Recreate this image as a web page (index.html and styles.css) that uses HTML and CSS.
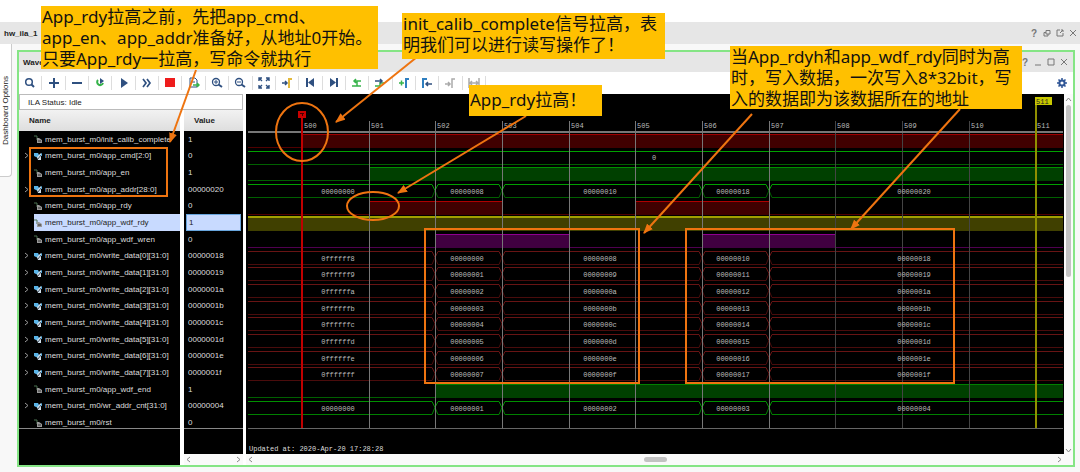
FILE: index.html
```html
<!DOCTYPE html>
<html lang="zh-CN">
<head>
<meta charset="utf-8">
<title>hw_ila_1</title>
<link rel="stylesheet" href="styles.css">
</head>
<body>
<div class="page">
  <header class="tabbar">
    <span class="tab-title">hw_ila_1</span>
    <div class="winctl">
      <button aria-label="Help">?</button>
      <button aria-label="Restore"><svg width="8" height="8"><path d="M3 1.500h4v3.500h-4zM3 3.500h-2v3.500h4v-2"/></svg></button>
      <button aria-label="Float"><svg width="8" height="8"><path d="M4 1H1v6h6V4M5 1h2v2M7 1L4 4"/></svg></button>
      <button aria-label="Close"><svg width="8" height="8"><path d="M1 1l6 6M7 1l-6 6"/></svg></button>
    </div>
  </header>
  <div class="workspace">
    <button class="side-tab"><span>Dashboard Options</span></button>
    <section class="panel">
      <header class="panel-head">
        <span>Wave</span>
        <div class="winctl">
          <button aria-label="Panel help">?</button>
          <button aria-label="Minimize"><svg width="8" height="8"><path d="M1 7h6"/></svg></button>
          <button aria-label="Maximize"><svg width="8" height="8"><path d="M1 1h6v6H1z"/></svg></button>
          <button aria-label="Close panel"><svg width="8" height="8"><path d="M1 1l6 6M7 1l-6 6"/></svg></button>
        </div>
      </header>
      <div class="toolbar">
        <div class="tools" id="tools"></div>
        <button class="gear" aria-label="Settings"><svg width="10" height="10" viewBox="0 0 10 10"><circle cx="5" cy="5" r="2.600" fill="none" stroke="#2f5596" stroke-width="2"/><path d="M5 0v2M5 8v2M0 5h2M8 5h2M1.500 1.500l1.400 1.400M7.100 7.100l1.400 1.400M8.500 1.500L7.100 2.900M2.900 7.100L1.500 8.500" stroke="#2f5596" stroke-width="1.500"/></svg></button>
      </div>
      <div class="content">
        <div class="signals">
          <div class="status">ILA Status: Idle</div>
          <div class="columns">
            <div class="col names">
              <div class="col-head">Name</div>
              <div class="list"><div class="rows" id="names"></div></div>
            </div>
            <div class="col values">
              <div class="col-head">Value</div>
              <div class="list"><div class="rows" id="values"></div></div>
              <div class="hbar"><svg width="5" height="7"><path d="M4 1L1 3.500L4 6"/></svg><svg width="5" height="7"><path d="M1 1l3 2.500L1 6"/></svg></div>
            </div>
          </div>
        </div>
        <div class="wave">
          <svg class="plot" id="plot" role="img" aria-label="Waveform"></svg>
          <div class="hbar"><svg width="5" height="7"><path d="M4 1L1 3.500L4 6"/></svg><i class="thumb"></i><svg width="5" height="7"><path d="M1 1l3 2.500L1 6"/></svg></div>
        </div>
        <div class="vbar"><svg width="7" height="5"><path d="M1 4l2.500-3L6 4"/></svg><i class="thumb"></i><svg width="7" height="5"><path d="M1 1l2.500 3L6 1"/></svg></div>
      </div>
    </section>
  </div>

  <svg class="marks" aria-hidden="true">
    <defs><marker id="head" markerUnits="userSpaceOnUse" markerWidth="10" markerHeight="8" refX="9" refY="4" orient="auto"><path class="tip" d="M0 0L10 4L0 8z"/></marker></defs>
    <rect x="30" y="148" width="137" height="48"/>
    <rect x="425" y="229" width="214" height="154"/>
    <rect x="686" y="229" width="268" height="154"/>
    <ellipse cx="302" cy="132" rx="26" ry="29"/>
    <ellipse cx="373" cy="206" rx="26" ry="14"/>
    <path class="arrow" d="M196 70L170 142"/>
    <path class="arrow" d="M417 57L336 122"/>
    <path class="arrow" d="M526 116L398 193"/>
    <path class="arrow" d="M752 114L644 233"/>
    <path class="arrow" d="M960 109L851 229"/>
  </svg>
  <p class="note note-a">App_rdy拉高之前，先把app_cmd、<br>app_en、app_addr准备好，从地址0开始。<br>只要App_rdy一拉高，写命令就执行</p>
  <p class="note note-b">init_calib_complete信号拉高，表<br>明我们可以进行读写操作了！</p>
  <p class="note note-c">App_rdy拉高！</p>
  <p class="note note-d">当App_rdyh和app_wdf_rdy同时为高<br>时，写入数据，一次写入8*32bit，写<br>入的数据即为该数据所在的地址</p>
</div>
<script src="script.js"></script>
</body>
</html>
```
FILE: styles.css
```css
* { box-sizing: border-box; }
body { margin: 0; background: #f8f8f8; font-family: "Liberation Sans", Arial, sans-serif; font-size: 8px; color: #222; }
button { border: 0; padding: 0; background: none; font: inherit; color: inherit; }
.page { position: relative; min-height: 472px; padding-top: 22px; background: linear-gradient(#fff 22px, #f8f8f8 22px); }
.tabbar { display: flex; align-items: center; justify-content: space-between; height: 22px; padding: 0 3px 0 4px; background: #e6e6e6; }
.tab-title, .panel-head { font-weight: bold; }
.winctl { display: flex; gap: 5px; align-items: center; }
.winctl button { display: flex; align-items: center; justify-content: center; width: 8px; height: 10px; color: #777; font-size: 10px; font-weight: bold; }
.winctl svg { fill: none; stroke: #777; }
.workspace { display: flex; align-items: flex-start; }
.side-tab { display: flex; align-items: center; justify-content: center; width: 12px; height: 133px; background: #fff; border: solid #ccc; border-width: 0 1px 1px 0; border-radius: 0 0 4px 0; }
.side-tab span { writing-mode: vertical-rl; transform: rotate(180deg); }
.panel { flex: 1; min-width: 0; margin: 6px 5px 5px 5px; border: 2px solid #85e585; background: #fff; }
.panel-head { display: flex; align-items: center; justify-content: space-between; height: 20px; padding: 0 5px 0 4px; background: #e6e6e6; }
.toolbar { display: flex; align-items: center; justify-content: space-between; height: 22px; padding-right: 6px; }
.tools { display: grid; grid-template-columns: repeat(20, 1fr); width: 467px; }
.tools button { display: flex; align-items: center; justify-content: center; height: 14px; border-right: 1px solid #ddd; }
.tools svg { fill: none; stroke: #2f5080; stroke-width: 2; }
.gear { display: flex; }
.content { display: flex; height: 371px; }
.signals { display: flex; flex-direction: column; width: 224px; }
.status { height: 16px; padding-left: 8px; line-height: 15px; border: 1px solid #bbb; }
.columns { display: flex; gap: 4px; flex: 1; }
.col { display: flex; flex-direction: column; background: #000; }
.names { width: 161px; }
.values { width: 59px; }
.col-head { height: 21px; line-height: 21px; padding-left: 10px; font-weight: bold; background: linear-gradient(#f2f2f2, #dedede); }
.list { height: 298px; overflow: hidden; border-bottom: 1px solid #888; }
.rows { display: grid; grid-template-rows: repeat(18, 1fr); height: 300px; color: #ddd; }
.row { display: flex; align-items: center; white-space: nowrap; }
.names .row { margin-left: 5px; padding-left: 10px; }
.names .row svg { flex: none; margin-right: 3px; }
.names .bus { margin-left: 0; padding-left: 5px; }
.names .bus svg:first-child { margin-right: 5px; }
.values .row { padding-left: 4px; }
.names .picked { margin-left: 15px; padding-left: 0; }
.rows .picked { background: #c8daff; color: #222; }
.values .picked { margin: 0 2px; padding-left: 2px; border: 1px solid #68a5dc; }
.hbar { display: flex; align-items: center; justify-content: space-between; height: 11px; margin-top: auto; padding: 0 2px; background: #fafafa; }
.hbar svg, .vbar svg { fill: none; stroke: #888; }
.thumb { display: block; border-radius: 3px; background: #c2c2c2; }
.hbar .thumb { width: 23px; height: 5px; }
.wave { display: flex; flex-direction: column; flex: 1; min-width: 0; margin-left: 3px; }
.plot { display: block; flex: 1; width: 100%; background: #000; font-family: "Liberation Mono", monospace; font-size: 7px; }
.vbar { display: flex; flex-direction: column; align-items: center; gap: 3px; width: 9px; padding: 3px 0 12px; background: #fafafa; }
.vbar .thumb { flex: 1; width: 5px; margin-bottom: 168px; }
.marks { position: absolute; top: 0; left: 0; width: 100%; height: 100%; pointer-events: none; fill: none; stroke: #ee7410; stroke-width: 2; }
.arrow { marker-end: url(#head); }
.tip { fill: #ee7410; stroke: none; }
.note { position: absolute; margin: 0; padding: 0 1px; background: #ffc000; color: #111; font-family: "Noto Sans", "Noto Sans CJK SC", sans-serif; font-size: 17px; line-height: 21px; white-space: nowrap; }
.note-a { left: 41px; top: 6px; width: 337px; }
.note-b { left: 402px; top: 13px; width: 263px; padding-bottom: 4px; }
.note-c { left: 469px; top: 85px; width: 133px; padding-top: 4px; padding-bottom: 6px; }
.note-d { left: 730px; top: 46px; width: 292px; }
```
FILE: script.js
```js
(() => {
const byId = id => document.getElementById(id);
const P = 'mem_burst_m0/';
const signals = [
  ['init_calib_complete', '1'], ['app_cmd[2:0]', '0', 1], ['app_en', '1'],
  ['app_addr[28:0]', '00000020', 1], ['app_rdy', '0'], ['app_wdf_rdy', '1'], ['app_wdf_wren', '0']
];
for (let i = 0; i < 8; i++) signals.push([`write_data[${i}][31:0]`, '000000' + (24 + i).toString(16), 1]);
signals.push(['app_wdf_end', '1'], ['wr_addr_cnt[31:0]', '00000004', 1], ['rst', '0']);

const chevron = '<svg width="5" height="7"><path d="M1 1l3 2.500L1 6" fill="none" stroke="#999"/></svg>';
const busIcon = '<svg width="8" height="8"><path d="M0 1h4l1 2 3-2v3H5L4 6 0 4z" fill="#5ab4e8"/><path d="M3 5l4-4v7H4z" fill="#cfdde8"/><path d="M4 7l3-4" stroke="#456"/></svg>';
const bitIcon = '<svg width="8" height="8"><path d="M0 1h3v4" fill="none" stroke="#4b7050"/><path d="M3 3h2l3 2v3H3z" fill="#999"/><path d="M4 6h3" stroke="#333"/></svg>';
signals.forEach(([name, value, bus], i) => {
  const picked = i === 5 ? ' picked' : '';
  byId('names').innerHTML += `<div class="row${bus ? ' bus' : ''}${picked}">${bus ? chevron + busIcon : bitIcon}<span>${P}${name}</span></div>`;
  byId('values').innerHTML += `<div class="row${picked}">${value}</div>`;
});

const G = 'stroke="#36b34a"', Y = 'stroke="#e3b93c"', L = 'stroke="#aaa"', B = 'stroke="#2f7fc0"';
const icons = [
  ['Search', '<circle cx="5" cy="5" r="3.300" stroke-width="1.500"/><path d="M7.500 7.500L10 10"/>'],
  ['Add', '<path d="M6 1v10M1 6h10"/>'],
  ['Remove', '<path d="M1 6h10"/>'],
  ['Run once', `<path ${G} d="M4 3a3 3 0 1 0 5 3"/><path d="M6 1l4 3-4 3z" fill="#2f5080" stroke="none"/>`],
  ['Run', '<path d="M3 1l7 5-7 5z" fill="#2f5080" stroke="none"/>'],
  ['Run immediate', '<path d="M2 2l3 4-3 4M6 2l3 4-3 4" stroke-width="1.700"/>'],
  ['Stop', '<path d="M1 1h10v9H1z" fill="#ee1c1c" stroke="none"/>'],
  ['Export', `<path stroke-width="1" d="M2 1h5l2 2v7H2zM4 5h3"/><path ${G} d="M5 8h6M9 6l2 2-2 2" stroke-width="1.500"/>`],
  ['Zoom in', '<circle cx="5" cy="5" r="3.500" stroke-width="1.300"/><path d="M7.500 7.500L11 10"/><path d="M3 5h4M5 3v4" stroke-width="1"/>'],
  ['Zoom out', '<circle cx="5" cy="5" r="3.500" stroke-width="1.300"/><path d="M7.500 7.500L11 10"/><path d="M3 5h4" stroke-width="1"/>'],
  ['Zoom fit', '<path stroke-width="1.400" d="M1 4V1h3M1 1l3 3M8 1h3v3M11 1L8 4M1 8v3h3M1 11l3-3M8 11h3V8M11 11L8 8"/>'],
  ['Go to cursor', `<path d="M1 6h5M4 4l2 2-2 2" stroke-width="1.500"/><path ${Y} d="M8 11V2h3"/>`],
  ['First', '<path d="M3 1v9"/><path d="M10 1v9L4 5.500z" fill="#2f5080" stroke="none"/>'],
  ['Last', '<path d="M9 1v9"/><path d="M2 1v9l6-4.500z" fill="#2f5080" stroke="none"/>'],
  ['Previous transition', `<path ${G} stroke-width="1.500" d="M1 9h9M10 4H3M5 2L3 4l2 2M6 4v5"/>`],
  ['Next transition', `<path ${G} stroke-width="1.500" d="M1 9h5V6h5"/><path stroke-width="1.500" d="M1 4h6M6 2l2 2-2 2"/>`],
  ['Add marker', `<path ${G} stroke-width="1.500" d="M1 6h5M3.500 3.500v5"/><path ${B} d="M8 11V2h3"/>`],
  ['Previous marker', `<path ${B} d="M2 11V2h4"/><path stroke-width="1.500" d="M5 7h6M7 5L5 7l2 2"/>`],
  ['Next marker', `<path ${L} stroke-width="1.500" d="M1 7h5M4 5l2 2-2 2M8 11V2h3"/>`],
  ['Swap', `<path ${L} stroke-width="1.500" d="M1 1v10M11 1v10M2 6h8M4 4L2 6l2 2M8 4l2 2-2 2"/>`]
];
byId('tools').innerHTML = icons.map(([t, d]) => `<button aria-label="${t}"><svg width="12" height="12">${d}</svg></button>`).join('');

// Plot geometry: one sample every 200/3 px, one signal row every 50/3 px.
const END = 817, START = 2;
const tick = n => Math.round(56 + (n - 500) * 200 / 3);
const rowTop = i => Math.round(40 + i * 50 / 3);
let out = '';
const line = (x1, y1, x2, y2, c, w = 1) => {
  const o = w % 2 / 2;
  out += `<path d="M${x1 + (x1 === x2 ? o : 0)} ${y1 + (y1 === y2 ? o : 0)}L${x2 + (x1 === x2 ? o : 0)} ${y2 + (y1 === y2 ? o : 0)}" stroke="${c}" stroke-width="${w}"/>`;
};
const text = (x, y, s, c = '#bbb', a = 'start') => { out += `<text x="${x}" y="${y}" fill="${c}" text-anchor="${a}">${s}</text>`; };
const high = (i, a, b, fill, edge, w = 1) => {
  const y = rowTop(i);
  out += `<rect x="${a}" y="${y}" width="${b - a}" height="14" fill="${fill}"/>`;
  line(a, y, b, y, edge, w);
};
const low = (i, c) => line(START, rowTop(i) + 13, END, rowTop(i) + 13, c);
const cuts = [START, tick(502), tick(503), tick(506), tick(507), END];
const centers = [92, 221, 354, 487, 668];
const words = [];
const bus = (i, labels, hi, lo) => {
  const t = rowTop(i) + .5, b = t + 13, m = t + 6;
  for (let k = 0; k < 5; k++) {
    const l = cuts[k], r = cuts[k + 1], ls = k ? 3 : 0, rs = k < 4 ? 3 : 0;
    out += `<path fill="none" stroke="${hi}" d="M${l} ${ls ? m : t}L${l + ls} ${t}H${r - rs}L${r} ${rs ? m : t}"/>`;
    out += `<path fill="none" stroke="${lo}" d="M${l} ${ls ? m : b}L${l + ls} ${b}H${r - rs}L${r} ${rs ? m : b}"/>`;
  }
  words.push([i, labels]);
};

low(0, '#500000');
high(0, tick(500), END, '#400000', '#a00000');
line(START, rowTop(1), END, rowTop(1), '#00a000');
low(1, '#006000');
low(2, '#006000');
high(2, tick(501), END, '#004000', '#009000');
bus(3, ['00000000', '00000008', '00000010', '00000018', '00000020'], '#00a000', '#006000');
low(4, '#500000');
high(4, tick(501), tick(503), '#400000', '#b00000');
high(4, tick(505), tick(507), '#400000', '#b00000');
high(5, START, END, '#404000', '#a0a000', 2);
low(6, '#500050');
high(6, tick(502), tick(504), '#400040', '#900090');
high(6, tick(506), tick(508), '#400040', '#900090');
for (let i = 0; i < 8; i++) {
  const h = (i + 8).toString(16);
  bus(7 + i, ['0ffffff' + h, '0000000' + i, '0000000' + h, '0000001' + i, '0000001' + h], '#681414', '#4a0c0c');
}
low(15, '#006000');
high(15, tick(502), END, '#004000', '#008000');
bus(16, ['00000000', '00000001', '00000002', '00000003', '00000004'], '#009000', '#008000');

for (let n = 501; n <= 510; n++) line(tick(n), 27, tick(n), 334, n < 508 ? '#777' : '#444');
for (let n = 500; n <= 511; n++) text(tick(n) + 2, 34, n);
line(START, 38, END, 38, '#777', 2);
line(START, 334, END, 334, '#666');
text(408, rowTop(1) + 9, '0', '#bbb', 'middle');
words.forEach(([i, w]) => w.forEach((s, k) => text(centers[k], rowTop(i) + 10, s, '#bbb', 'middle')));
line(tick(500), 17, tick(500), 334, '#c00000', 2);
out += `<path d="M${tick(500) - 4} 17h8v7h-8z" fill="#c80000"/><path d="M${tick(500) - 2} 19.500h4M${tick(500) + .5} 19v3" stroke="#400"/>`;
line(tick(511) + 1, 3, tick(511) + 1, 334, '#909000', 2);
out += `<path d="M${tick(511)} 3h17v8h-17z" fill="#c8c800"/>`;
text(tick(511) + 1, 10, '511', '#222');
text(3, 357, 'Updated at: 2020-Apr-20 17:28:28', '#ddd');
byId('plot').innerHTML = out;
})();
```
